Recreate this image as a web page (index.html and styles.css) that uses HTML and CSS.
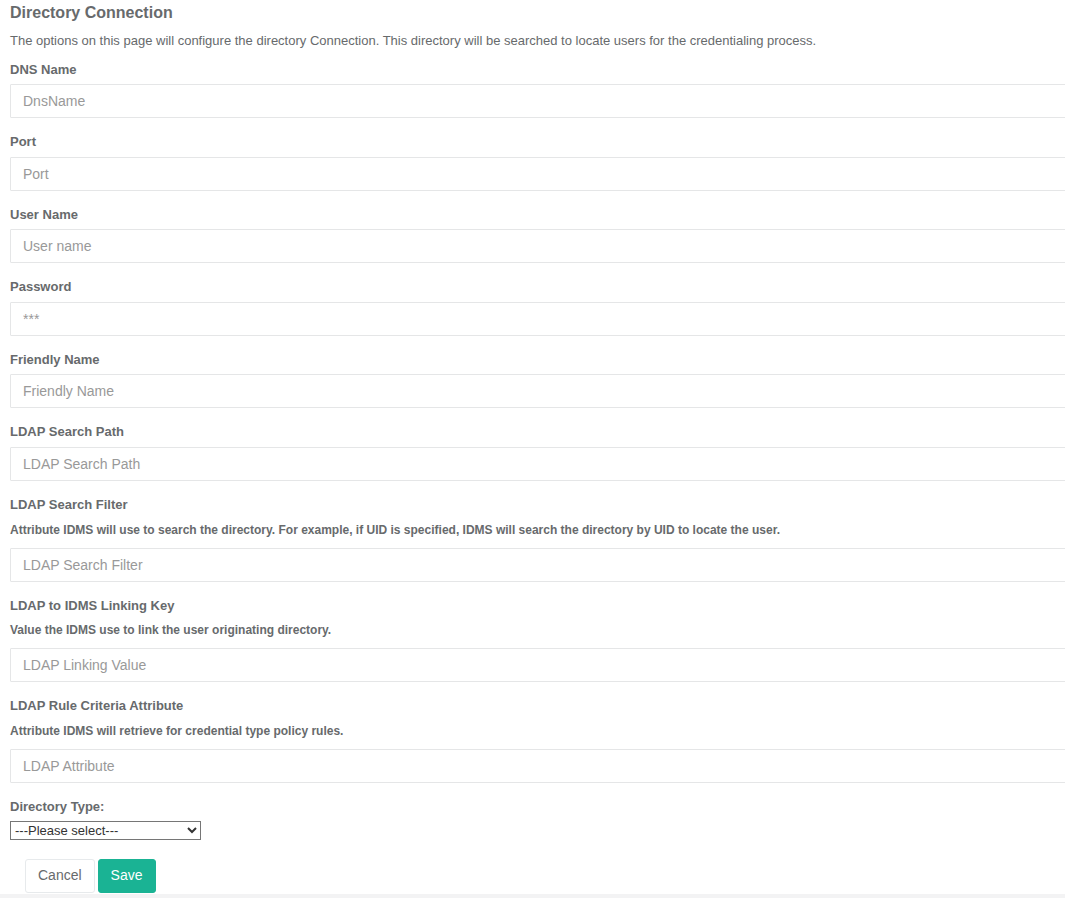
FILE: index.html
```html
<!DOCTYPE html>
<html lang="en">
<head>
<meta charset="utf-8">
<title>Directory Connection</title>
<link rel="stylesheet" href="styles.css">
</head>
<body>
<div class="page">
  <div class="content">
    <h2 class="title">Directory Connection</h2>
    <p class="intro">The options on this page will configure the directory Connection. This directory will be searched to locate users for the credentialing process.</p>

    <div class="form-group">
      <label class="label">DNS Name</label>
      <input class="form-control" type="text" placeholder="DnsName">
    </div>
    <div class="form-group">
      <label class="label">Port</label>
      <input class="form-control" type="text" placeholder="Port">
    </div>
    <div class="form-group">
      <label class="label">User Name</label>
      <input class="form-control" type="text" placeholder="User name">
    </div>
    <div class="form-group">
      <label class="label">Password</label>
      <input class="form-control" type="password" placeholder="***">
    </div>
    <div class="form-group">
      <label class="label">Friendly Name</label>
      <input class="form-control" type="text" placeholder="Friendly Name">
    </div>
    <div class="form-group">
      <label class="label">LDAP Search Path</label>
      <input class="form-control" type="text" placeholder="LDAP Search Path">
    </div>
    <div class="form-group">
      <label class="label">LDAP Search Filter</label>
      <p class="help">Attribute IDMS will use to search the directory. For example, if UID is specified, IDMS will search the directory by UID to locate the user.</p>
      <input class="form-control" type="text" placeholder="LDAP Search Filter">
    </div>
    <div class="form-group">
      <label class="label">LDAP to IDMS Linking Key</label>
      <p class="help">Value the IDMS use to link the user originating directory.</p>
      <input class="form-control" type="text" placeholder="LDAP Linking Value">
    </div>
    <div class="form-group">
      <label class="label">LDAP Rule Criteria Attribute</label>
      <p class="help">Attribute IDMS will retrieve for credential type policy rules.</p>
      <input class="form-control" type="text" placeholder="LDAP Attribute">
    </div>
    <div class="select-group">
      <label class="label">Directory Type:</label>
      <select class="select">
        <option>---Please select---</option>
      </select>
    </div>
    <div class="actions">
      <button class="btn btn-white" type="button">Cancel</button>
      <button class="btn btn-primary" type="button">Save</button>
    </div>
  </div>
  <div class="footer-strip"></div>
</div>
</body>
</html>
```

FILE: styles.css
```css
html, body {
  margin: 0;
  padding: 0;
  height: 898px;
  overflow: hidden;
  background: #ffffff;
}

body {
  font-family: "Liberation Sans", Arial, sans-serif;
  font-size: 13px;
  line-height: 1.42857;
  color: #676a6c;
}

.page {
  display: flex;
  flex-direction: column;
  height: 898px;
}

.content {
  background: #ffffff;
  padding: 3px 0 1px 10px;
  margin-right: -30px;
}

.title {
  margin: 0 0 9px;
  font-size: 16px;
  font-weight: 700;
  line-height: 20px;
  color: #676a6c;
}

.intro {
  margin: 0 0 10px;
  font-size: 13px;
  line-height: 1.42857;
}

.form-group {
  margin-bottom: 15px;
}

.label {
  display: inline-block;
  margin-bottom: 5px;
  font-weight: 700;
  font-size: 13px;
}

.help {
  margin: 2px 0 9px;
  font-size: 12px;
  line-height: 17px;
  font-weight: 700;
}

.form-control {
  display: block;
  box-sizing: border-box;
  width: 100%;
  height: 34px;
  padding: 6px 12px;
  font-family: "Liberation Sans", Arial, sans-serif;
  font-size: 14px;
  line-height: 1.42857;
  color: #555555;
  background: #ffffff;
  border: 1px solid #e5e6e7;
  border-radius: 1px;
  outline: none;
}

.form-control::placeholder {
  color: #999999;
}

.select-group {
  margin-bottom: 19px;
}

.select {
  display: block;
  width: 191px;
  height: 19px;
  font-family: "Liberation Sans", Arial, sans-serif;
  font-size: 13px;
  color: #333333;
  border: 1px solid #767676;
  border-radius: 0;
  background: #ffffff;
  padding: 0;
}

.actions {
  display: flex;
  gap: 3px;
  padding-left: 15px;
}

.btn {
  box-sizing: border-box;
  height: 34px;
  padding: 6px 12px;
  font-family: "Liberation Sans", Arial, sans-serif;
  font-size: 14px;
  line-height: 1.42857;
  border-radius: 3px;
  border: 1px solid transparent;
  cursor: pointer;
}

.btn-white {
  background: #ffffff;
  color: #676a6c;
  border-color: #e7eaec;
}

.btn-primary {
  background: #1ab394;
  border-color: #1ab394;
  color: #ffffff;
}

.footer-strip {
  flex: 1;
  background: #f3f3f4;
}
```
